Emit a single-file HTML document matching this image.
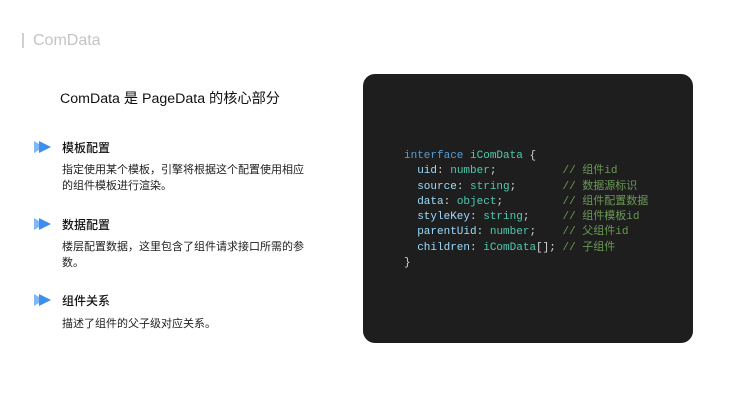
<!DOCTYPE html>
<html><head><meta charset="utf-8"><style>
body{margin:0;width:746px;height:418px;background:#fff;position:relative;overflow:hidden;font-family:"Liberation Sans","Noto Sans CJK SC",sans-serif;}
.a{position:absolute;white-space:nowrap}
.bar{position:absolute;left:22px;top:33px;width:2px;height:15px;background:#d0d0d0}
.ic{position:absolute;width:17px;height:12px}
h3{margin:0;font-size:12px;font-weight:500;color:#111}
.p{font-size:11px;line-height:16px;color:#222;white-space:normal;width:245px}
.code{position:absolute;left:363px;top:74px;width:330px;height:269px;background:#1e1e1e;border-radius:12px}
pre{position:absolute;left:404px;top:149px;margin:0;font-family:"Liberation Mono","Noto Sans CJK SC",monospace;font-size:11px;line-height:15.3px;color:#9cdcfe}
.k{color:#569cd6}.t{color:#4ec9b0}.c{color:#6a9955}.w{color:#d4d4d4}
</style></head><body>
<div class="bar"></div>
<div class="a" style="left:33px;top:32px;font-size:16px;color:#c4c4c4">ComData</div>
<div class="a" style="left:60px;top:88px;font-size:14.2px;color:#111">ComData 是 PageData 的核心部分</div>

<svg class="ic" style="left:34px;top:141px" viewBox="0 0 17 12"><path d="M0 0L10 6L0 12Z" fill="#7fb8f5"/><path d="M5 0L17 6L5 12Z" fill="#3d8ef0"/></svg>
<div class="a" style="left:62px;top:139px"><h3>模板配置</h3></div>
<div class="a p" style="left:62px;top:162px">指定使用某个模板，引擎将根据这个配置使用相应的组件模板进行渲染。</div>

<svg class="ic" style="left:34px;top:218px" viewBox="0 0 17 12"><path d="M0 0L10 6L0 12Z" fill="#7fb8f5"/><path d="M5 0L17 6L5 12Z" fill="#3d8ef0"/></svg>
<div class="a" style="left:62px;top:216px"><h3>数据配置</h3></div>
<div class="a p" style="left:62px;top:239px">楼层配置数据，这里包含了组件请求接口所需的参数。</div>

<svg class="ic" style="left:34px;top:294px" viewBox="0 0 17 12"><path d="M0 0L10 6L0 12Z" fill="#7fb8f5"/><path d="M5 0L17 6L5 12Z" fill="#3d8ef0"/></svg>
<div class="a" style="left:62px;top:292px"><h3>组件关系</h3></div>
<div class="a p" style="left:62px;top:316px">描述了组件的父子级对应关系。</div>

<div class="code"></div>
<pre><span class="k">interface</span> <span class="t">iComData</span> <span class="w">{</span>
  uid<span class="w">:</span> <span class="t">number</span><span class="w">;</span>          <span class="c">// 组件id</span>
  source<span class="w">:</span> <span class="t">string</span><span class="w">;</span>       <span class="c">// 数据源标识</span>
  data<span class="w">:</span> <span class="t">object</span><span class="w">;</span>         <span class="c">// 组件配置数据</span>
  styleKey<span class="w">:</span> <span class="t">string</span><span class="w">;</span>     <span class="c">// 组件模板id</span>
  parentUid<span class="w">:</span> <span class="t">number</span><span class="w">;</span>    <span class="c">// 父组件id</span>
  children<span class="w">:</span> <span class="t">iComData</span><span class="w">[];</span> <span class="c">// 子组件</span>
<span class="w">}</span></pre>
</body></html>
